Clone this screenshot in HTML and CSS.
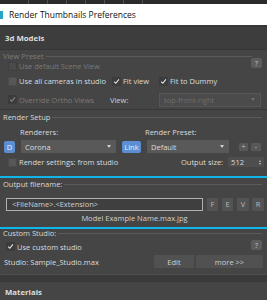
FILE: index.html
```html
<!DOCTYPE html>
<html>
<head>
<meta charset="utf-8">
<link rel="stylesheet" href="styles.css">
</head>
<body>
<div class="strip"><span></span><span></span><span></span><span></span><span></span><span></span><span></span></div>
<div class="titlebar"><span class="ticon"></span><span class="ttext">Render Thumbnails Preferences</span></div>
<div class="rhead">3d Models</div>
<div class="panel">
  <div class="group gp-view">
    <div class="glabel dis gl-view"><span>View Preset</span><i class="gline"></i></div>
    <div class="row r1">
      <span class="cb dis"></span><span class="lbl dis">Use default Scene View</span>
      <span class="qbtn q1">?</span>
    </div>
    <div class="row r2">
      <span class="cb en"></span><span class="lbl w-cams">Use all cameras in studio</span>
      <span class="cb on"><svg viewBox="0 0 9 9"><path d="M1.5 4.6 L3.6 6.8 L7.6 1.8" fill="none" stroke="#e8e8e8" stroke-width="1.4"/></svg></span><span class="lbl w-fit">Fit view</span>
      <span class="cb on"><svg viewBox="0 0 9 9"><path d="M1.5 4.6 L3.6 6.8 L7.6 1.8" fill="none" stroke="#e8e8e8" stroke-width="1.4"/></svg></span><span class="lbl">Fit to Dummy</span>
    </div>
    <div class="row r3">
      <span class="cb on dis"><svg viewBox="0 0 9 9"><path d="M1.5 4.6 L3.6 6.8 L7.6 1.8" fill="none" stroke="#8a8a8a" stroke-width="1.4"/></svg></span><span class="lbl dis w-ortho">Override Ortho Views</span>
      <span class="lbl w-view">View:</span>
      <span class="dd dd-view"><span>top-front-right</span><i class="arr"></i></span>
    </div>
  </div>
  <div class="group gp-render">
    <div class="glabel"><span>Render Setup</span><i class="gline"></i></div>
    <div class="row r-lbls"><span class="lbl w-rend">Renderers:</span><span class="lbl">Render Preset:</span></div>
    <div class="row r-rend">
      <span class="bbtn b-d">D</span>
      <span class="dd dd-corona"><span>Corona</span><i class="arr"></i></span>
      <span class="bbtn b-link">Link</span>
      <span class="dd dd-def"><span>Default</span><i class="arr"></i></span>
      <span class="sbtn s-plus">+</span>
      <span class="sbtn s-minus">-</span>
    </div>
    <div class="row r-set">
      <span class="cb en"></span><span class="lbl w-settings">Render settings: from studio</span>
      <span class="lbl">Output size:</span>
      <span class="spin"><span>512</span><i class="spa"><b class="up"></b><b class="dn"></b></i></span>
    </div>
  </div>
  <div class="cyan c1"></div>
  <div class="group gp-out">
    <div class="glabel"><span>Output filename:</span><i class="gline"></i></div>
    <div class="row r-field">
      <span class="field">&lt;FileName&gt;.&lt;Extension&gt;</span>
      <span class="gbtn g-f">F</span><span class="gbtn g-e">E</span><span class="gbtn g-v">V</span><span class="gbtn g-r">R</span>
    </div>
    <div class="preview">Model Example Name.max.jpg</div>
  </div>
  <div class="cyan c2"></div>
  <div class="group gp-studio">
    <div class="glabel gl-studio"><span>Custom Studio:</span><i class="gline"></i></div>
    <div class="row r-cust">
      <span class="cb on"><svg viewBox="0 0 9 9"><path d="M1.5 4.6 L3.6 6.8 L7.6 1.8" fill="none" stroke="#e8e8e8" stroke-width="1.4"/></svg></span><span class="lbl">Use custom studio</span>
      <span class="qbtn q2">?</span>
    </div>
    <div class="row r-studio">
      <span class="lbl w-studio">Studio: Sample_Studio.max</span>
      <span class="gbtn b-edit">Edit</span>
      <span class="gbtn b-more">more &gt;&gt;</span>
    </div>
  </div>
</div>
<div class="sep"></div>
<div class="rhead mat">Materials</div>
</body>
</html>
```
FILE: styles.css
```css
* { box-sizing: border-box; }
html, body { margin: 0; padding: 0; }
body {
  width: 267px;
  height: 300px;
  overflow: hidden;
  background: #454545;
  font-family: "Open Sans", "Noto Sans", sans-serif;
  font-size: 7.5px;
  color: #dcdcdc;
}
.strip {
  height: 4px;
  background: #2b2b2b;
  display: flex;
  padding-left: 28px;
  gap: 18px;
}
.strip span { width: 1px; height: 4px; background: #505050; }
.titlebar {
  height: 21px;
  background: #ffffff;
  display: flex;
  align-items: center;
  color: #111;
  font-size: 8.5px;
}
.ticon { width: 3px; height: 8px; background: #2aa6c8; margin-right: 6px; }
.rhead {
  height: 25px;
  background: #3d3d3d;
  border-top: 2px solid #383838;
  border-bottom: 1px solid #363636;
  font-weight: 700;
  font-size: 7.8px;
  padding-left: 5px;
  display: flex;
  align-items: center;
  color: #dedede;
}
.group { display: flex; flex-direction: column; }
.glabel {
  display: flex;
  align-items: center;
  height: 12px;
  padding-left: 3px;
  color: #d8d8d8;
}
.glabel.dis { color: #7c7c7c; }
.gline { flex: 1; height: 1px; background: #5a5a5a; margin-left: 2px; margin-right: 5px; }
.gp-view { padding-top: 2px; border-bottom: 1px solid #383838; height: 60px; }
.gl-view { height: 8px; }
.gl-view .gline { margin-right: 15px; }
.qbtn {
  width: 11px; height: 10px; background: #5c5c5c; border-radius: 2px;
  display: flex; align-items: center; justify-content: center;
  font-size: 6.5px; color: #cfcfcf; margin-right: 5px; flex: none;
}
.q1 { margin-left: auto; align-self: flex-start; margin-top: -2px; }
.row { display: flex; align-items: center; }
.lbl { white-space: nowrap; }
.dis { color: #7a7a7a; }
.cb {
  width: 9px; height: 9px; flex: none;
  background: #4e4e4e;
  border: 1px solid #3e3e3e;
  margin-right: 2px;
  display: flex;
}
.cb.en { background: #575757; border-color: #4a4a4a; }
.cb.dis { background: #4a4a4a; }
.cb.on { background: #3c3c3c; border-color: #3c3c3c; }
.cb svg { width: 7px; height: 7px; }
.r1 { height: 12px; padding-left: 8px; }
.r2 { height: 18px; padding-left: 8px; }
.w-cams { width: 93px; }
.w-fit { width: 36px; }
.r3 { height: 19px; padding-left: 8px; }
.w-ortho { width: 91px; }
.w-view { width: 49px; color: #cfcfcf; }
.dd {
  height: 13px;
  background: #595959;
  display: flex; align-items: center; justify-content: space-between;
  padding: 0 5px 0 4px;
  color: #dadada;
}
.arr { width: 0; height: 0; border-left: 2px solid transparent; border-right: 2px solid transparent; border-top: 3px solid #cfcfcf; }
.dd-view { width: 102px; height: 14px; background: #4b4b4b; border: 1px solid #565656; color: #6f6f6f; }
.dd-view .arr { border-top-color: #707070; }
.gp-render { padding-top: 1px; }
.r-lbls { height: 14px; padding-left: 20px; padding-top: 3px; }
.w-rend { width: 125px; }
.r-rend { height: 15px; padding-left: 4px; margin-top: 2px; }
.bbtn {
  height: 12px; background: #5b8ed3; color: #e9f0fa;
  display: flex; align-items: center; justify-content: center;
}
.b-d { width: 11px; border-radius: 2px; }
.dd-corona { width: 95px; margin-left: 6px; }
.b-link { width: 19px; margin-left: 6px; border-radius: 2px; }
.dd-def { width: 82px; margin-left: 6px; }
.sbtn {
  width: 9px; height: 8px; background: #585858; color: #bdbdbd;
  display: flex; align-items: center; justify-content: center; border-radius: 1px;
  font-size: 7px;
}
.s-plus { margin-left: 10px; }
.s-minus { margin-left: 3px; width: 10px; }
.r-set { height: 16px; padding-left: 8px; }
.w-settings { width: 162px; }
.spin {
  width: 36px; height: 10px; margin-left: 5px; background: #4e4e4e;
  display: flex; align-items: center; justify-content: space-between; padding: 0 3px 0 3px;
}
.spa { display: flex; flex-direction: column; gap: 1px; }
.spa b { width: 0; height: 0; border-left: 1.5px solid transparent; border-right: 1.5px solid transparent; }
.spa .up { border-bottom: 2px solid #bbb; }
.spa .dn { border-top: 2px solid #bbb; }
.cyan { height: 2px; background: #10b5ea; }
.c1 { margin-top: 6px; }
.c2 { margin-top: 2px; }
.r-field { height: 14px; padding-left: 6px; margin-top: 7px; }
.field {
  width: 197px; height: 13px; border: 1px solid #b0b0b0; background: #3f3f3f;
  color: #cfcfcf; display: flex; align-items: center; padding-left: 5px;
}
.gbtn {
  height: 13px; background: #535353; color: #b8b8b8;
  display: flex; align-items: center; justify-content: center; border-radius: 1px;
}
.g-f { width: 11px; margin-left: 4px; }
.g-e { width: 11px; margin-left: 4px; }
.g-v { width: 12px; margin-left: 4px; }
.g-r { width: 12px; margin-left: 3px; }
.preview { height: 14px; display: flex; align-items: center; justify-content: center; color: #d0d0d0; padding-left: 2px; }
.gp-studio { height: 44px; }
.gl-studio { height: 8px; }
.r-cust { height: 13px; padding-left: 6px; margin-top: 3px; }
.q2 { margin-left: auto; margin-right: 5px; margin-top: -3px; }
.r-studio { height: 13px; padding-left: 4px; margin-top: 2px; }
.w-studio { width: 150px; }
.b-edit { width: 40px; background: #515151; color: #cfcfcf; }
.b-more { width: 67px; margin-left: 2px; background: #515151; color: #cfcfcf; }
.sep { height: 8px; border-top: 1px solid #4e4e4e; background: #3a3a3a; margin-top: 1px; }
.rhead.mat { height: 20px; border: none; background: #454545; }
```
